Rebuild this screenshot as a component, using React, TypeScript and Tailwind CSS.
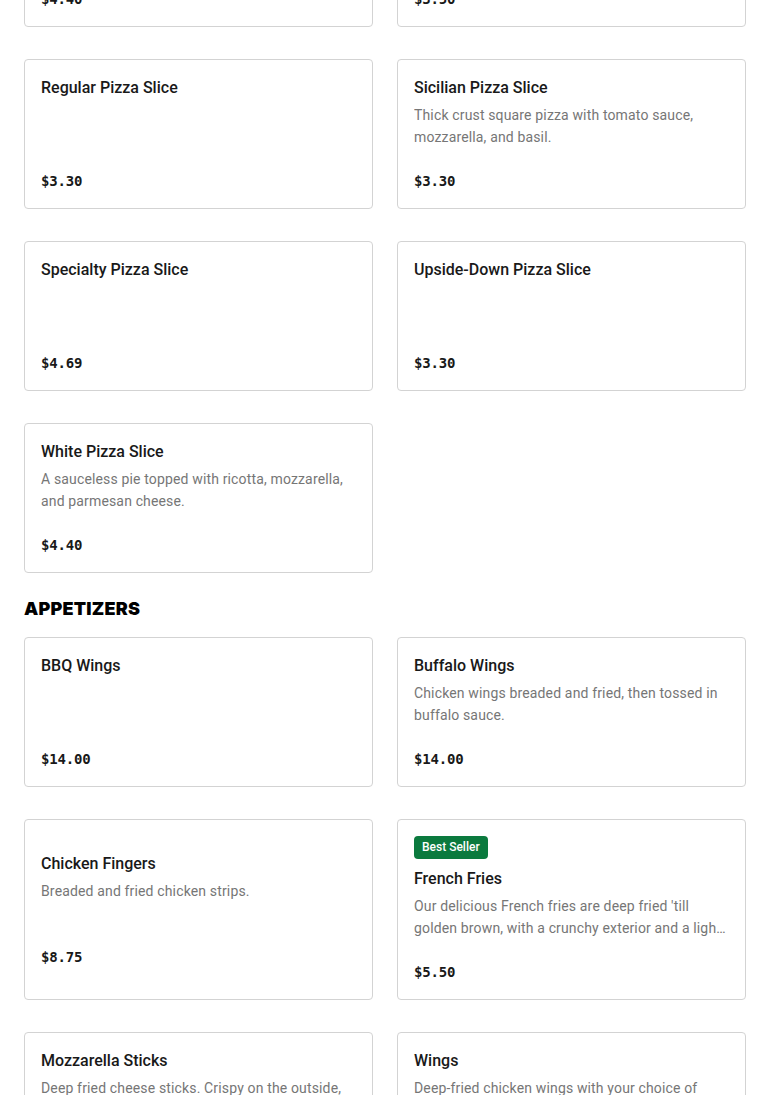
import React from "react";

type Item = { name: string; desc?: string; price: string; badge?: string };

const pizzas: Item[] = [
  { name: "Pepperoni Pizza Slice", desc: "Classic slice topped with pepperoni and mozzarella.", price: "$4.40" },
  { name: "Plain Pizza Slice", desc: "Classic cheese slice with tomato sauce and mozzarella.", price: "$3.50" },
  { name: "Regular Pizza Slice", price: "$3.30" },
  { name: "Sicilian Pizza Slice", desc: "Thick crust square pizza with tomato sauce, mozzarella, and basil.", price: "$3.30" },
  { name: "Specialty Pizza Slice", price: "$4.69" },
  { name: "Upside-Down Pizza Slice", price: "$3.30" },
  { name: "White Pizza Slice", desc: "A sauceless pie topped with ricotta, mozzarella, and parmesan cheese.", price: "$4.40" },
];

const appetizers: Item[] = [
  { name: "BBQ Wings", price: "$14.00" },
  { name: "Buffalo Wings", desc: "Chicken wings breaded and fried, then tossed in buffalo sauce.", price: "$14.00" },
  { name: "Chicken Fingers", desc: "Breaded and fried chicken strips.", price: "$8.75" },
  {
    name: "French Fries",
    desc: "Our delicious French fries are deep fried 'till golden brown, with a crunchy exterior and a light, fluffy interior.",
    price: "$5.50",
    badge: "Best Seller",
  },
  { name: "Mozzarella Sticks", desc: "Deep fried cheese sticks. Crispy on the outside, gooey on the inside.", price: "$9.50" },
  { name: "Wings", desc: "Deep-fried chicken wings with your choice of sauce.", price: "$14.00" },
];

function Card({ item }: { item: Item }) {
  return (
    <div className="flex flex-col justify-center rounded-[4px] border border-[#d3d3d3] bg-white p-4">
      {item.badge && (
        <div className="mb-2 self-start rounded-[4px] bg-[#0b7a3e] px-2 text-[12px] font-medium leading-[23px] text-white">
          {item.badge}
        </div>
      )}
      <div className="text-[16px] font-medium leading-6 text-[#191919]">{item.name}</div>
      <div className="mt-1 h-[44px] overflow-hidden text-[14px] leading-[22px] tracking-[0.15px] text-[#767676] line-clamp-2">
        {item.desc ?? ""}
      </div>
      <div className="mt-[22px] font-['DejaVu_Sans_Mono',monospace] text-[14px] font-bold leading-[22px] tracking-[-0.2px] text-[#191919]">
        {item.price}
      </div>
    </div>
  );
}

export default function App() {
  return (
    <div className="min-h-screen overflow-hidden bg-white font-['Roboto',sans-serif]">
      <div className="mt-[-123px] px-6">
        <div className="grid grid-cols-2 gap-x-6 gap-y-8">
          {pizzas.map((p) => (
            <Card key={p.name} item={p} />
          ))}
        </div>
        <h2 className="mt-6 mb-4 font-['Inter',sans-serif] text-[18px] font-black uppercase leading-6 tracking-[0.2px] text-black">
          Appetizers
        </h2>
        <div className="grid grid-cols-2 gap-x-6 gap-y-8">
          {appetizers.map((p) => (
            <Card key={p.name} item={p} />
          ))}
        </div>
      </div>
    </div>
  );
}
